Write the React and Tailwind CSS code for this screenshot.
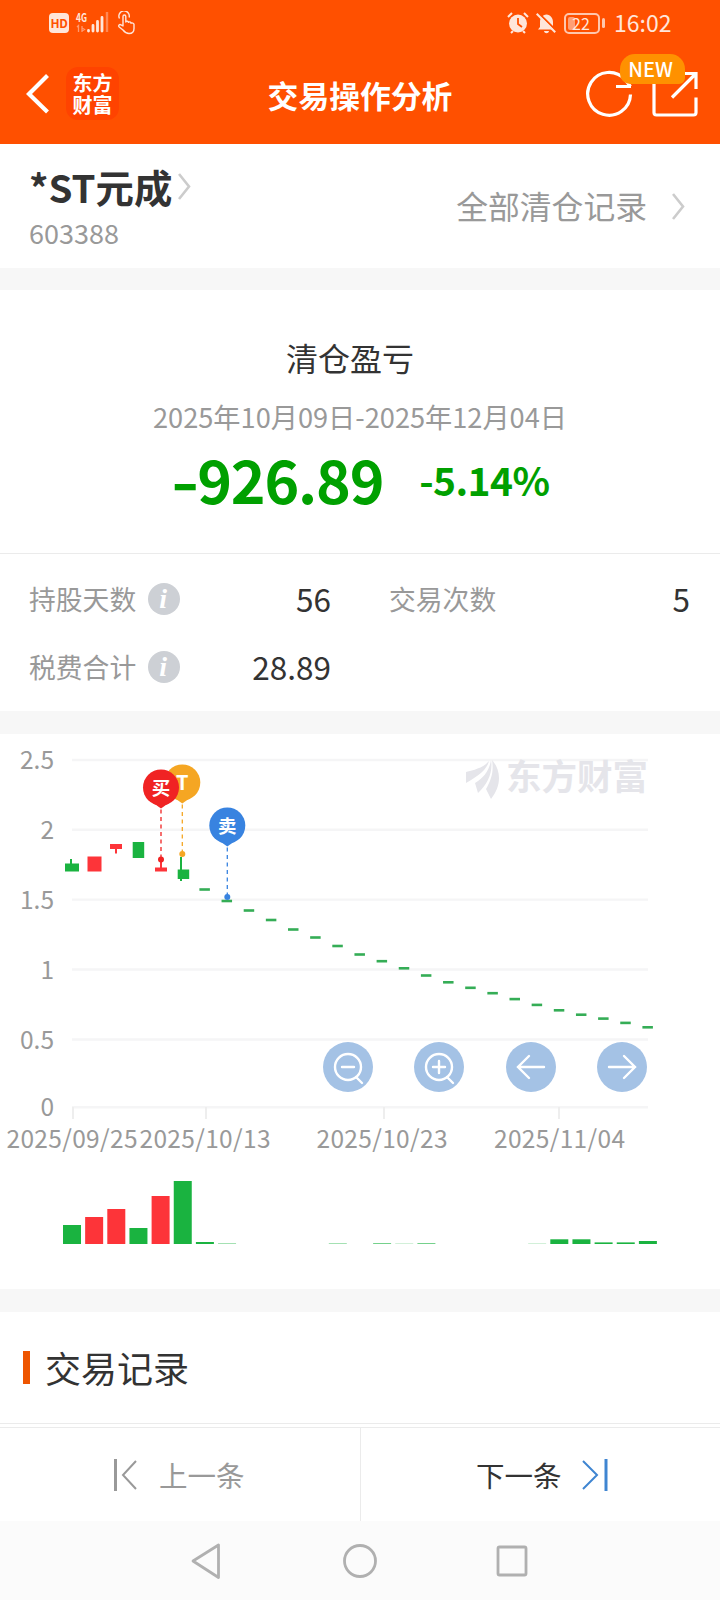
const GREEN = '#1ab340';
const RED = '#fd3439';
const STEP = 22.15;
const FIRST_X = 72;

const yLabels = [
  { label: '2.5', y: 26 },
  { label: '2', y: 95.7 },
  { label: '1.5', y: 165.6 },
  { label: '1', y: 235.5 },
  { label: '0.5', y: 305.5 },
  { label: '0', y: 373.2 },
];

const xLabels = [
  { label: '2025/09/25', x: 72, tick: 73 },
  { label: '2025/10/13', x: 205, tick: 206 },
  { label: '2025/10/23', x: 382, tick: 384 },
  { label: '2025/11/04', x: 559.5, tick: 559 },
];

const candles = [
  { x: 65, w: 14, top: 129.5, h: 8, wick: [71, 125, 130], color: GREEN },
  { x: 87.5, w: 14, top: 122.5, h: 15, color: RED },
  { x: 110, w: 12, top: 110, h: 5, wick: [116, 110, 119.5], color: RED },
  { x: 132.7, w: 11.5, top: 108, h: 16, color: GREEN },
  { x: 155, w: 12, top: 133.5, h: 4, wick: [161, 124, 134], color: RED },
  { x: 177.7, w: 11.5, top: 135.5, h: 9.5, wick: [181, 123, 147], color: GREEN },
];

// limit-down days: open, close, high and low are the same price
const flatDays = [
  155.5, 167, 176.5, 186, 195.5, 203.5, 212, 220.5, 227.2, 234.3, 241.5, 248.3, 253.8, 259.2, 265.1, 270.9, 276.3,
  280.7, 284.6, 288.9, 293.3,
];

const volumes = [
  [0, 19, GREEN], [1, 27, RED], [2, 35, RED], [3, 16, GREEN], [4, 48, RED], [5, 63, GREEN],
  [6, 2, GREEN], [7, 0.4, GREEN], [12, 0.4, GREEN], [14, 0.6, GREEN], [15, 0.2, GREEN], [16, 0.6, GREEN],
  [21, 0.2, GREEN], [22, 4.7, GREEN], [23, 4.7, GREEN], [24, 1.6, GREEN], [25, 1.6, GREEN], [26, 3, GREEN],
];

function Pin({ x, y, dotY, color, label, size = 18.5 }) {
  return (
    <g>
      <line x1={x} x2={x} y1={y + 22} y2={dotY} stroke={color} strokeWidth="1.3" strokeDasharray="4 3.5" />
      <circle cx={x} cy={dotY} r="3" fill={color} />
      <circle cx={x} cy={y} r="18" fill={color} />
      <path d={`M${x - 14} ${y + 11} L${x} ${y + 21} L${x + 14} ${y + 11} Z`} fill={color} />
      <text x={x} y={y + 7} textAnchor="middle" fontSize={size} fontWeight="700" fill="#fff">
        {label}
      </text>
    </g>
  );
}

function StatusBar() {
  return (
    <div className="flex h-[46px] items-center pr-[48px] pl-[49px] text-[#ffe6da]">
      <span className="flex h-5 w-5 items-center justify-center rounded-[4px] bg-[#ffe6da] text-[12px] font-bold tracking-tight text-[#ff5000]">
        HD
      </span>
      <svg className="ml-[7px] overflow-visible" width="34" height="24" viewBox="0 0 34 24">
        <text x="0" y="10.500" fontSize="11.500" fontWeight="700" fill="currentColor" textLength="11" lengthAdjust="spacingAndGlyphs">
          4G
        </text>
        <path d="M1 16l1.500-1.500v6.500M6 15v6M6 17l2.500 1.500-2.500 1.500" fill="none" stroke="#ff9a70" strokeWidth="1.300" />
        <path d="M12.500 19.500v.500M17 14.500v5.500M21.500 10.500v9.500M26 6.500v13.500" stroke="currentColor" strokeWidth="2.800" strokeLinecap="round" />
        <path d="M31 1v20" stroke="#ff8855" strokeWidth="2.400" />
      </svg>
      <svg className="ml-[7px]" width="20" height="24" viewBox="0 0 20 24" fill="none" stroke="currentColor" strokeWidth="1.400" strokeLinejoin="round">
        <path d="M2.500 7.500a5.200 5.200 0 1 1 9.600-1" />
        <path d="M6 15V5.500c0-2 2.800-2 2.800 0V11c.5-1.200 2.500-1 2.700.3.800-.8 2.400-.5 2.500.9 1-.6 2.800-.2 3 1.200v4c0 3-1.500 5.100-5 5.100-3.300 0-4.500-1.500-6-3.500L2.200 16c-1.500-1.600.5-3.300 1.800-2.100z" />
      </svg>
      <div className="ml-auto flex items-center">
        <svg width="22" height="24" viewBox="0 0 22 24">
          <circle cx="11" cy="12.500" r="9" fill="currentColor" />
          <path d="M1 6l4-4M21 6l-4-4M4 22l2-2M18 22l-2-2" stroke="currentColor" strokeWidth="2" />
          <path d="M11 7v6l4 3" fill="none" stroke="#ff5000" strokeWidth="1.800" />
        </svg>
        <svg className="ml-[7px]" width="21" height="24" viewBox="0 0 21 24">
          <path d="M10.500 1.500v2c4 .5 6.500 3.500 6.500 7.500v5l2 2.500H2L4 16v-5c0-4 2.500-7 6.500-7.500z" fill="currentColor" />
          <path d="M8 20h5c-.5 3-4.500 3-5 0z" fill="currentColor" />
          <path d="M2 1.500l19 19" stroke="#ff5000" strokeWidth="2" />
          <path d="M.7 2.800l18.500 18.500" stroke="currentColor" strokeWidth="2" />
        </svg>
        <div className="ml-[7px] flex h-[21px] w-9 items-center rounded-[5px] border-2 border-[#ffc7ad] p-[2px]">
          <div className="flex h-full w-[7px] items-center rounded-[2px] bg-[#ff9f75]">
            <span className="pb-px pl-[4px] text-[16px] leading-none">22</span>
          </div>
        </div>
        <div className="ml-[2px] h-[10px] w-[3px] rounded-sm bg-[#ffc7ad]" />
        <span className="ml-[9px] w-[58px] pb-px text-[23px] leading-none whitespace-nowrap">16:02</span>
      </div>
    </div>
  );
}

function Header() {
  return (
    <header className="h-[144px] bg-[#ff5000] text-white">
      <StatusBar />
      <div className="relative flex h-[98px] items-center justify-center">
        <div className="absolute top-[21px] left-[26px] flex items-center">
          <svg width="24" height="40" viewBox="0 0 24 40" fill="none" stroke="currentColor" strokeWidth="4.200">
            <path d="M21.500 1.500L3 20l18.500 18" />
          </svg>
          <div className="ml-4 flex h-[53px] w-[53px] items-center justify-center rounded-xl bg-[#ff4300]">
            <p className="w-[40px] text-[20px] leading-[22px] font-bold break-all">东方财富</p>
          </div>
        </div>
        <h1 className="text-[30.8px] leading-none font-bold">交易操作分析</h1>
        <svg className="absolute top-[24px] right-[20px]" width="116" height="50" viewBox="0 0 116 50" fill="none" stroke="currentColor" strokeWidth="3.200">
          <path d="M46.500 24.500A21.400 21.400 0 1 1 41 9.500l5.500 7M32 16.500h15" />
          <path d="M70 10v32.500a2.500 2.500 0 0 0 2.500 2.500h37a2.500 2.500 0 0 0 2.500-2.500V27.500M112 19V3.500H96M112 3.500L88 27.500" />
        </svg>
        <span className="absolute top-[8px] left-[620px] flex h-[30px] w-[65px] items-center justify-center rounded-[15px] rounded-br-[6px] rounded-bl-[10px] bg-[#ff9100] pr-1 text-[20px] leading-none font-medium">
          NEW
        </span>
      </div>
    </header>
  );
}

function Chevron({ className }) {
  return (
    <svg className={className} width="13" height="27" viewBox="0 0 13 27" fill="none" stroke="#ccc" strokeWidth="2.600">
      <path d="M1 1l10 12.500L1 26" />
    </svg>
  );
}

function StockRow() {
  return (
    <div className="flex h-[124px] justify-between bg-white pr-[35px] pl-[29px]">
      <div className="pt-[22px]">
        <div className="flex items-center">
          <span className="text-[38.4px] leading-[40px] font-bold text-[#333]">*ST元成</span>
          <Chevron className="ml-[6px]" />
        </div>
        <div className="pt-[11px] text-[27px] leading-[32px] text-[#999]">603388</div>
      </div>
      <div className="flex items-center">
        <span className="text-[31.8px] leading-none text-[#999]">全部清仓记录</span>
        <Chevron className="ml-[25px]" />
      </div>
    </div>
  );
}

function InfoIcon() {
  return (
    <span className="ml-[12px] flex h-8 w-8 items-center justify-center rounded-full bg-[#cdd0d5] pr-[2px] font-['Liberation_Serif',serif] text-[28px] leading-none font-bold text-white italic">
      i
    </span>
  );
}

function Stat({ label, value, info }) {
  return (
    <div className="flex h-[68px] items-center">
      <span className="text-[26.8px] leading-none text-[#999]">{label}</span>
      {info && <InfoIcon />}
      <span className="ml-auto pb-px text-[31.5px] leading-none text-[#333]">{value}</span>
    </div>
  );
}

function ProfitSummary() {
  return (
    <section className="h-[421px] bg-white">
      <div className="flex h-[263px] flex-col items-center pt-[47px]">
        <h2 className="mr-5 text-[32px] leading-10 text-[#333]">清仓盈亏</h2>
        <p className="mt-[21px] text-[27.2px] leading-9 whitespace-nowrap text-[#999]">2025年10月09日-2025年12月04日</p>
        <div className="mt-[10px] flex items-baseline leading-[70px] font-bold text-[#00a000]">
          <span className="text-[59px] tracking-[-1.2px]">
            <span className="mr-[6px] inline-block origin-left scale-x-130">-</span>926.89
          </span>
          <span className="relative bottom-[8px] ml-[36px] text-[39px] tracking-[-0.6px]">-5.14%</span>
        </div>
      </div>
      <div className="grid grid-cols-[302px_301px] gap-x-[58px] border-t border-[#ebebeb] pt-[11px] pl-[29px]">
        <Stat label="持股天数" value="56" info />
        <Stat label="交易次数" value="5" />
        <Stat label="税费合计" value="28.89" info />
      </div>
    </section>
  );
}

function RoundButton({ children }) {
  return (
    <button className="h-[50px] w-[50px] rounded-full bg-[#a4c2e5]">
      <svg width="50" height="50" viewBox="0 0 50 50" fill="none" stroke="#fff" strokeWidth="2.400" strokeLinecap="round">
        {children}
      </svg>
    </button>
  );
}

function PriceChart() {
  return (
    <section className="relative h-[555px] bg-white">
      <svg width="720" height="555" viewBox="0 0 720 555">
        {yLabels.map(({ label, y }) => (
          <g key={label}>
            <line x1="72" x2="648" y1={y} y2={y} stroke="#f5f5f6" strokeWidth="2.400" />
            <text x="54" y={y + 9} textAnchor="end" fontSize="24.500" fill="#999">
              {label}
            </text>
          </g>
        ))}
        {xLabels.map(({ label, x, tick }) => (
          <g key={label}>
            <line x1={tick} x2={tick} y1="373" y2="385" stroke="#eee" strokeWidth="2" />
            <text x={x} y="414" textAnchor="middle" fontSize="24.500" fill="#999" textLength="131">
              {label}
            </text>
          </g>
        ))}

        {/* watermark */}
        <g fill="#e5e5ea">
          <path d="M466 38c8-2 17-4 23-11-2 8-9 14-23 22z" />
          <path d="M475 49c8-5 14-11 16-23 2 12-3 24-13 33z" />
          <path d="M486 55c5-9 8-17 6-29 9 10 10 25-1 39z" />
          <text x="506" y="56" fontSize="35.500" fontWeight="700">
            东方财富
          </text>
        </g>

        {candles.map(({ x, w, top, h, wick, color }) => (
          <g key={x} fill={color}>
            <rect x={x} y={top} width={w} height={h} />
            {wick && <line x1={wick[0]} x2={wick[0]} y1={wick[1]} y2={wick[2]} stroke={color} strokeWidth="2" />}
          </g>
        ))}
        {flatDays.map((y, i) => (
          <rect key={y} x={FIRST_X + (i + 6) * STEP - 5.5} y={y - 1.3} width="10.500" height="2.600" fill="#35ad56" />
        ))}
        {volumes.map(([i, h, color]) => (
          <rect key={i} x={FIRST_X + i * STEP - 9} y={510 - h} width="18" height={h} fill={color} />
        ))}

        <Pin x={182.3} y={48.5} dotY={120} color="#f5a623" label="T" size={20} />
        <Pin x={161} y={53.5} dotY={125.5} color="#f02323" label="买" />
        <Pin x={227.3} y={91.5} dotY={163} color="#3883e0" label="卖" />
      </svg>

      <div className="absolute top-[307.500px] left-[323px] flex gap-[41.300px]">
        <RoundButton>
          <circle cx="25" cy="25" r="13" />
          <path d="M19 25h12M33 35l6 6" />
        </RoundButton>
        <RoundButton>
          <circle cx="25" cy="25" r="13" />
          <path d="M19 25h12M25 19v12M33 35l6 6" />
        </RoundButton>
        <RoundButton>
          <path d="M12 25h26M23 14L12 25l11 11" />
        </RoundButton>
        <RoundButton>
          <path d="M12 25h26M27 14l11 11-11 11" />
        </RoundButton>
      </div>
    </section>
  );
}

function Pager() {
  return (
    <div className="flex h-[94px] border-t border-[#ebebeb] bg-white text-[28.5px] leading-none">
      <button className="flex w-[361px] items-center border-r border-[#ebebeb] pl-[114px] text-[#999]">
        <svg width="24" height="32" viewBox="0 0 24 32" fill="none" stroke="currentColor">
          <path d="M1.500 0v32" strokeWidth="3" />
          <path d="M22 2L9 16l13 14" strokeWidth="2" />
        </svg>
        <span className="ml-[21px] pt-[2px]">上一条</span>
      </button>
      <button className="flex flex-1 items-center pl-[115px] text-[#333]">
        <span className="pt-[2px]">下一条</span>
        <svg className="ml-[20px]" width="26" height="32" viewBox="0 0 26 32" fill="none" stroke="#3f85d1">
          <path d="M1 2l14 14L1 30" strokeWidth="2" />
          <path d="M24 0v32" strokeWidth="3" />
        </svg>
      </button>
    </div>
  );
}

export default function App() {
  return (
    <div className="h-[1600px] w-[720px] overflow-hidden bg-[#f7f7f7] font-['Noto_Sans_CJK_SC',sans-serif]">
      <Header />
      <StockRow />
      <div className="h-[22px]" />
      <ProfitSummary />
      <div className="h-[23px]" />
      <PriceChart />
      <div className="h-[23px]" />
      <section className="flex h-[112px] items-center border-b border-[#ebebeb] bg-white pl-[23px]">
        <div className="h-[33px] w-[7px] bg-[#ee5500]" />
        <h2 className="ml-[15px] pb-px text-[36px] leading-none text-[#333]">交易记录</h2>
      </section>
      <div className="h-[3px] bg-white" />
      <Pager />
      <nav className="h-[79px] bg-[#fbfbfb]">
        <svg width="720" height="79" viewBox="0 0 720 79" fill="none" stroke="#b0b0b0" strokeWidth="2.800" strokeLinejoin="round">
          <path d="M218.500 24v32.500L193 40z" />
          <circle cx="360" cy="40" r="15.500" />
          <rect x="498" y="26" width="28" height="28" rx="1.500" />
        </svg>
      </nav>
    </div>
  );
}
